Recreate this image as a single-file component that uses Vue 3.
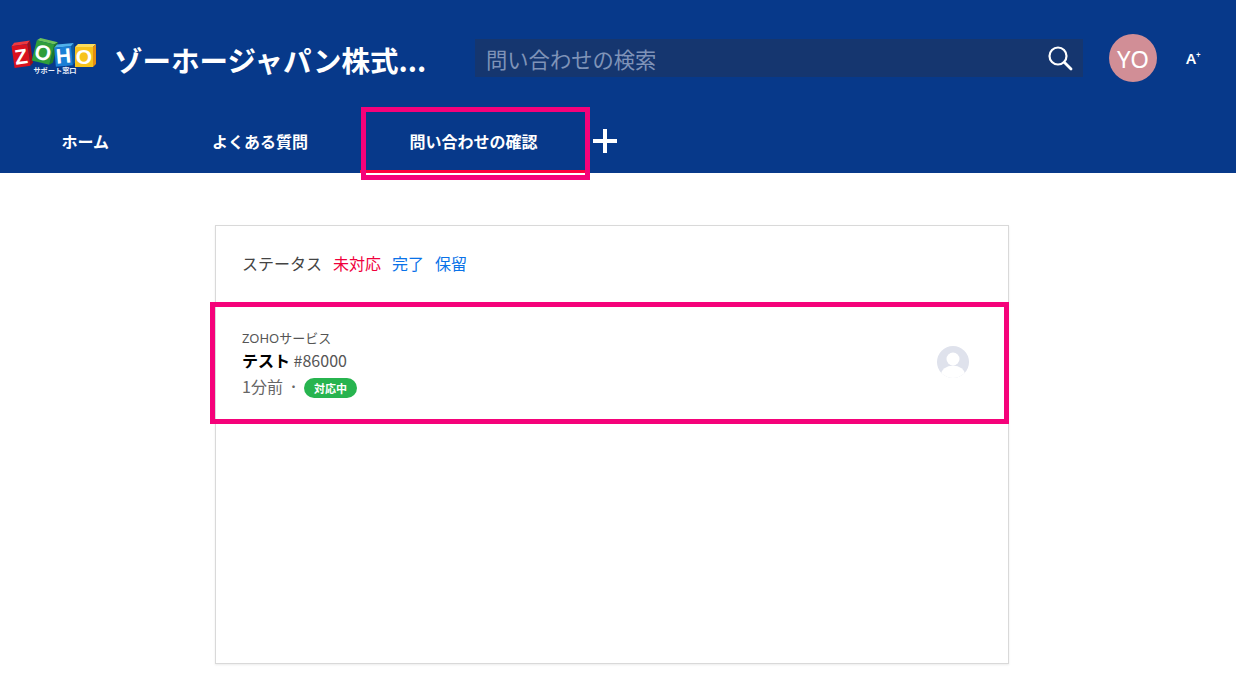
<script setup>
const tabs = [
  { label: "ホーム", active: false },
  { label: "よくある質問", active: false },
  { label: "問い合わせの確認", active: true },
];

// front face, plus a top and right face to give the logo blocks some depth
const makeCube = (x, y, w, h, rot, front, top, side, letter) => ({
  rot,
  front,
  top,
  side,
  letter,
  x,
  y,
  w,
  h,
  cx: x + w / 2,
  cy: y + h / 2,
  topPts: `${x},${y} ${x + 3},${y - 3} ${x + w + 3},${y - 3} ${x + w},${y}`,
  sidePts: `${x + w},${y} ${x + w + 3},${y - 3} ${x + w + 3},${y + h - 3} ${x + w},${y + h}`,
});

const cubes = [
  makeCube(13, 45, 16, 22, -8, "#d9121f", "#ee3a3f", "#9e0e18", "Z"),
  makeCube(34, 42, 18, 21, 14, "#2f9e3a", "#6cc35a", "#1e7a2a", "O"),
  makeCube(55, 47, 17, 19, -5, "#1a7fd6", "#4fb0ea", "#0f5a9e", "H"),
  makeCube(75, 47, 18, 20, 0, "#f7c31c", "#fbdc5c", "#e58f12", "O"),
];
</script>

<template>
  <div class="page">
    <header class="header">
      <div class="top">
        <svg class="logo" width="88" height="44" viewBox="10 34 88 44">
          <g v-for="(c, i) in cubes" :key="i" :transform="`rotate(${c.rot} ${c.cx} ${c.cy})`">
            <polygon :points="c.topPts" :fill="c.top" />
            <polygon :points="c.sidePts" :fill="c.side" />
            <rect :x="c.x" :y="c.y" :width="c.w" :height="c.h" :fill="c.front" />
            <text :x="c.cx" :y="c.y + c.h - 3" class="logo-letter" text-anchor="middle">{{ c.letter }}</text>
          </g>
          <text x="55" y="73" class="logo-sub" text-anchor="middle">サポート窓口</text>
        </svg>
        <h1 class="title">ゾーホージャパン株式...</h1>
        <div class="search">
          <span class="search-text">問い合わせの検索</span>
          <svg width="26" height="26" viewBox="0 0 26 26" fill="none" stroke="#fff" stroke-width="2.2">
            <circle cx="11" cy="11" r="8.5" />
            <path d="M17.5 17.5 L24 24" stroke-width="2.8" stroke-linecap="round" />
          </svg>
        </div>
        <div class="avatar">YO</div>
        <div class="font-size">A<sup>+</sup></div>
      </div>
      <nav class="nav">
        <a v-for="t in tabs" :key="t.label" class="tab" :class="{ active: t.active }">{{ t.label }}</a>
        <svg class="plus" width="26" height="26" viewBox="0 0 26 26">
          <path d="M1 13 H25 M13 1 V25" stroke="#fff" stroke-width="4" />
        </svg>
      </nav>
      <div class="mark mark-tab"></div>
    </header>

    <main class="main">
      <section class="card">
        <div class="status">
          <span class="status-label">ステータス</span>
          <a class="open">未対応</a>
          <a class="link">完了</a>
          <a class="link">保留</a>
        </div>
        <div class="ticket">
          <div class="ticket-body">
            <div class="dept">ZOHOサービス</div>
            <div class="subject"><b>テスト</b> <span>#86000</span></div>
            <div class="meta">
              <span>1分前</span>
              <span class="dot">・</span>
              <span class="badge">対応中</span>
            </div>
          </div>
          <svg class="person" width="32" height="32" viewBox="0 0 32 32">
            <defs>
              <clipPath id="person-clip"><circle cx="16" cy="16" r="16" /></clipPath>
            </defs>
            <circle cx="16" cy="16" r="16" fill="#dfe2ec" />
            <g clip-path="url(#person-clip)" fill="#fff">
              <circle cx="16" cy="13" r="6.5" />
              <ellipse cx="16" cy="29" rx="12" ry="9.5" />
            </g>
          </svg>
          <div class="mark mark-ticket"></div>
        </div>
      </section>
    </main>
  </div>
</template>

<style>
html, body {
  margin: 0;
  background: #fff;
}
</style>

<style scoped>
.page {
  width: 1236px;
  height: 689px;
  overflow: hidden;
  font-family: "Noto Sans CJK JP", "Noto Sans", sans-serif;
}

.header {
  position: relative;
  height: 173px;
  background: #07398a;
  color: #fff;
}

.top {
  display: flex;
  align-items: center;
  height: 110px;
  padding: 10px 0 0 10px;
  box-sizing: border-box;
}

.logo {
  flex: none;
  margin: -8px 16px 0 0;
}

.logo-letter {
  font: 700 21px "Liberation Sans", sans-serif;
  fill: #fff;
}

.logo-sub {
  font: 700 7.2px "Noto Sans CJK JP", sans-serif;
  fill: #e8eefa;
}

.title {
  width: 361px;
  margin: -2px 0 0;
  font-size: 28.5px;
  font-weight: 700;
  white-space: nowrap;
}

.search {
  display: flex;
  align-items: center;
  justify-content: space-between;
  width: 608px;
  height: 38px;
  margin-top: -4px;
  padding: 0 10px 0 11px;
  box-sizing: border-box;
  background: #15366f;
}

.search-text {
  font-size: 21.3px;
  color: #7f93b8;
}

.avatar {
  display: flex;
  align-items: center;
  justify-content: center;
  width: 48px;
  height: 48px;
  margin: -4px 0 0 26px;
  border-radius: 50%;
  background: #d18e96;
  font-family: "Noto Sans", sans-serif;
  font-size: 24px;
}

.font-size {
  margin: -4px 0 0 29px;
  font-family: "Noto Sans", sans-serif;
  font-size: 15px;
  font-weight: 600;
}

.font-size sup {
  font-size: 8px;
  line-height: 0;
}

.nav {
  display: flex;
  align-items: stretch;
  height: 63px;
  padding-left: 10px;
}

.tab {
  display: flex;
  align-items: center;
  padding: 2px 51.5px 0;
  font-size: 16px;
  font-weight: 700;
  white-space: nowrap;
  border-bottom: 3px solid transparent;
  box-sizing: border-box;
}

.tab.active {
  width: 228px;
  padding: 2px 50px 0;
  border-bottom-color: #ff003c;
}

.plus {
  align-self: center;
  margin: 0 0 2px 4px;
}

.mark {
  position: absolute;
  border: 5px solid #f5027a;
  box-sizing: border-box;
  pointer-events: none;
}

.mark-tab {
  left: 361px;
  top: 107px;
  width: 229px;
  height: 73px;
}

.main {
  padding: 52px 0 0 215px;
}

.card {
  width: 794px;
  height: 439px;
  box-sizing: border-box;
  background: #fff;
  border: 1px solid #d9d9d9;
  box-shadow: 0 1px 2px rgba(0, 0, 0, 0.08);
}

.status {
  display: flex;
  align-items: center;
  gap: 11px;
  height: 76px;
  padding: 0 0 2px 26px;
  box-sizing: border-box;
  font-size: 16px;
  color: #444;
}

.open {
  color: #f0003c;
}

.link {
  color: #0a72e8;
}

.ticket {
  position: relative;
  display: flex;
  align-items: center;
  justify-content: space-between;
  height: 116px;
  padding: 0 39px 0 26px;
}

.ticket-body {
  display: flex;
  flex-direction: column;
  padding-top: 7px;
}

.dept {
  font-family: "Noto Sans", "Noto Sans CJK JP", sans-serif;
  font-size: 13px;
  line-height: 22px;
  color: #555;
}

.subject {
  margin-top: -1px;
  font-size: 16px;
  line-height: 24px;
  color: #555;
}

.subject b {
  color: #000;
  font-weight: 700;
}

.meta {
  display: flex;
  align-items: center;
  height: 28px;
  font-size: 16px;
  color: #666;
}

.dot {
  width: 21px;
  text-align: center;
  font-size: 12px;
}

.badge {
  display: flex;
  align-items: center;
  justify-content: center;
  width: 53px;
  height: 20px;
  margin-top: 4px;
  border-radius: 10px;
  background: #27b44f;
  color: #fff;
  font-size: 11px;
  font-weight: 700;
}

.person {
  margin-top: 3px;
}

.mark-ticket {
  left: -6px;
  top: 0;
  width: 799px;
  height: 122px;
}
</style>
